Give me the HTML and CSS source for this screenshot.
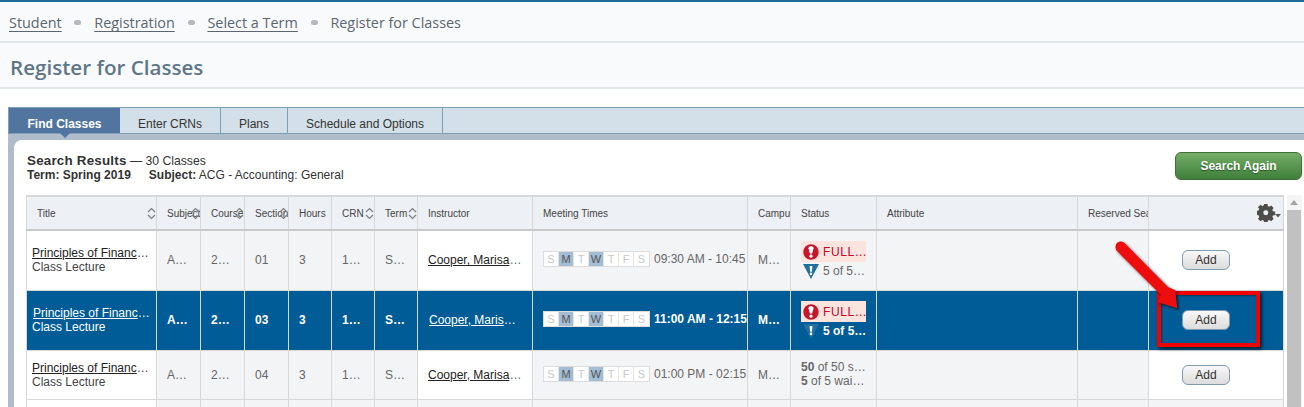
FILE: index.html
```html
<!DOCTYPE html>
<html lang="en">
<head>
<meta charset="utf-8">
<title>Register for Classes</title>
<link rel="stylesheet" href="styles.css">
</head>
<body>
<svg class="defs" width="0" height="0" aria-hidden="true">
  <symbol id="sort" viewBox="0 0 9 13"><path d="M1 5 4.5 1.5 8 5M1 8 4.5 11.5 8 8" fill="none" stroke="#7b8084" stroke-width="1.2"/></symbol>
  <symbol id="full" viewBox="0 0 17 17"><circle cx="8.5" cy="8.5" r="8.2" fill="#c9152b"/><path d="M5.8 4.4C5.8 1.8 11.2 1.800 11.2 4.4L9.7 10H7.3Z" fill="#fff"/><circle cx="8.5" cy="12.9" r="1.7" fill="#fff"/></symbol>
  <symbol id="warn" viewBox="0 0 16 15"><path d="M0 0H16L8 15Z" fill="#1f6f9f"/><path d="M6.6 2H9.4L8.9 7.8H7.1Z" fill="#fff"/><circle cx="8" cy="9.9" r="1.3" fill="#fff"/></symbol>
</svg>
<header class="crumbs">
  <a href="#">Student</a><i></i><a href="#">Registration</a><i></i><a href="#">Select a Term</a><i></i><span>Register for Classes</span>
</header>
<h1 class="page-title">Register for Classes</h1>
<main class="panel">
  <nav class="tabs">
    <a class="tab active" href="#">Find Classes</a>
    <a class="tab t2" href="#">Enter CRNs</a>
    <a class="tab t3" href="#">Plans</a>
    <a class="tab t4" href="#">Schedule and Options</a>
  </nav>
  <section class="card">
    <div class="results-head">
      <div class="results-text">
        <div class="results-title"><b>Search Results</b> — 30 Classes</div>
        <div class="results-sub"><b class="term">Term: Spring 2019</b><b>Subject:</b> ACG - Accounting: General</div>
      </div>
      <button class="search-again">Search Again</button>
    </div>
    <div class="table-wrap">
      <table>
        <thead>
          <tr>
            <th>Title<svg class="s"><use href="#sort"/></svg></th>
            <th>Subject<svg class="s"><use href="#sort"/></svg></th>
            <th>Course<svg class="s"><use href="#sort"/></svg></th>
            <th>Section<svg class="s"><use href="#sort"/></svg></th>
            <th>Hours</th>
            <th>CRN<svg class="s"><use href="#sort"/></svg></th>
            <th>Term<svg class="s"><use href="#sort"/></svg></th>
            <th>Instructor</th>
            <th>Meeting Times</th>
            <th>Campus</th>
            <th>Status</th>
            <th>Attribute</th>
            <th>Reserved Seats</th>
            <th class="gear-cell">
              <svg class="gear" viewBox="0 0 24 18"><g transform="translate(0.2 0) scale(.86)"><path fill="#4c4c4c" fill-rule="evenodd" d="M8 0h4l.5 2.6 1.6.7 2.2-1.5 2.8 2.8-1.5 2.2.7 1.6 2.6.5v4l-2.6.5-.7 1.6 1.5 2.2-2.8 2.8-2.2-1.5-1.6.7-.5 2.6H8l-.5-2.6-1.6-.7-2.2 1.5-2.8-2.8 1.500-2.2-.7-1.6L-.9 12V8l2.6-.5.7-1.6-1.5-2.2 2.8-2.8 2.2 1.5 1.6-.7ZM10 7.2a2.9 2.9 0 1 0 0 5.8 2.9 2.9 0 0 0 0-5.8Z"/></g><path fill="#5a5a5a" d="M18 10h6l-3 3.6Z"/></svg>
            </th>
          </tr>
        </thead>
        <tbody>
          <tr class="r1">
            <td class="title"><a href="#">Principles of Financ</a>…<br>Class Lecture</td>
            <td>A…</td><td>2…</td><td>01</td><td>3</td><td>1…</td><td>S…</td>
            <td class="inst"><a href="#">Cooper, Marisa</a>…</td>
            <td class="meet"><span class="days"><u>S</u><u class="on">M</u><u>T</u><u class="on">W</u><u>T</u><u>F</u><u>S</u></span><span class="time">09:30 AM - 10:45 AM</span></td>
            <td>M…</td>
            <td class="status"><div class="full"><svg><use href="#full"/></svg><span>FULL…</span></div><div class="wait"><svg><use href="#warn"/></svg>5 of 5…</div></td>
            <td></td><td></td>
            <td class="act"><button class="add">Add</button></td>
          </tr>
          <tr class="r2 sel">
            <td class="title"><a href="#">Principles of Financ</a>…<br>Class Lecture</td>
            <td>A…</td><td>2…</td><td>03</td><td>3</td><td>1…</td><td>S…</td>
            <td class="inst"><a href="#">Cooper, Maris</a>…</td>
            <td class="meet"><span class="days"><u>S</u><u class="on">M</u><u>T</u><u class="on">W</u><u>T</u><u>F</u><u>S</u></span><span class="time">11:00 AM - 12:15 PM</span></td>
            <td>M…</td>
            <td class="status"><div class="full"><svg><use href="#full"/></svg><span>FULL…</span></div><div class="wait"><svg><use href="#warn"/></svg>5 of 5…</div></td>
            <td></td><td></td>
            <td class="act"><button class="add">Add</button></td>
          </tr>
          <tr class="r3">
            <td class="title"><a href="#">Principles of Financ</a>…<br>Class Lecture</td>
            <td>A…</td><td>2…</td><td>04</td><td>3</td><td>1…</td><td>S…</td>
            <td class="inst"><a href="#">Cooper, Marisa</a>…</td>
            <td class="meet"><span class="days"><u>S</u><u class="on">M</u><u>T</u><u class="on">W</u><u>T</u><u>F</u><u>S</u></span><span class="time">01:00 PM - 02:15 PM</span></td>
            <td>M…</td>
            <td class="status plain"><div><b>50</b> of 50 s…</div><div><b>5</b> of 5 wai…</div></td>
            <td></td><td></td>
            <td class="act"><button class="add">Add</button></td>
          </tr>
          <tr class="r4"><td></td><td></td><td></td><td></td><td></td><td></td><td></td><td></td><td></td><td></td><td></td><td></td><td></td><td></td></tr>
        </tbody>
      </table>
      <div class="scrollbar"><span class="up"></span><span class="thumb"></span></div>
    </div>
  </section>
</main>
<div class="callout-box"></div>
<svg class="callout-arrow" viewBox="0 0 90 90">
  <defs><filter id="shade" x="-20%" y="-20%" width="150%" height="150%"><feDropShadow dx="2" dy="2" stdDeviation="1.5" flood-color="#000" flood-opacity=".65"/></filter></defs>
  <path filter="url(#shade)" fill="#ee0d0d" d="M3 3C5 1 8.500 1 10.500 3L54 47 61 50 63 68 44 62 47 55 3 11C1 9 1 5 3 3Z"/>
</svg>
</body>
</html>
```
FILE: styles.css
```css
* { box-sizing: border-box; }
html, body { margin: 0; height: 407px; overflow: hidden; }
body { position: relative; background: #fff; font-family: "Liberation Sans", Arial, sans-serif; color: #333; border-top: 2px solid #1f6b9a; }
.defs { position: absolute; }

.crumbs { display: flex; align-items: center; height: 41px; padding: 2px 0 0 9px; background: #f8fafc; border-bottom: 2px solid #e2e7ea; font: 14.4px "Open Sans", sans-serif; color: #5b6670; }
.crumbs a { color: #5b6670; text-decoration: underline; text-underline-offset: 3px; }
.crumbs i { width: 7px; height: 5px; margin: 0 12.8px; border-radius: 3px; background: #b4b8bb; }

.page-title { margin: 0; height: 46px; padding: 9px 0 0 10px; background: #f8fafc; border-bottom: 2px solid #e2e7ea; font: 600 20.6px/30px "Open Sans", sans-serif; color: #5f7689; }

.panel { margin: 18px 0 0 8px; background: #aebccc; height: 300px; }
.tabs { display: flex; height: 27px; background: #d4e0e9; border-top: 1px solid #7fa0b4; border-left: 1px solid #7fa0b4; border-bottom: 1px solid #7fa0b4; font-size: 12px; }
.tab { display: block; height: 25px; padding-top: 4px; text-align: center; line-height: 25px; color: #333; text-decoration: none; border-right: 1px solid #7fa0b4; }
.tab.active { position: relative; width: 111px; background: #51759f; color: #fff; font-weight: bold; border-right: 0; }
.tab.active::after { content: ""; position: absolute; left: 50%; margin-left: -5px; top: 25px; border: 5px solid transparent; border-top-color: #51759f; border-bottom: 0; }
.t2 { width: 101px; }
.t3 { width: 67px; }
.t4 { width: 155px; }

.card { margin: 6px 0 0 6px; height: 270px; padding: 14px 2px 0 12px; background: #fff; border-top-left-radius: 8px; }
.results-head { display: flex; justify-content: space-between; align-items: flex-start; height: 41px; font-size: 12.2px; line-height: 14px; }
.results-text { padding-left: 1px; }
.results-title b { font-size: 13.4px; letter-spacing: .2px; }
.results-sub { font-size: 12px; }
.results-sub b { font-weight: bold; }
.term { margin-right: 18px; }
.search-again { width: 127px; height: 28px; margin-top: -2px; border: 1px solid #3d7036; border-radius: 6px; background: linear-gradient(#74ae68, #3f7f3a); color: #fff; font: bold 12px "Liberation Sans", sans-serif; text-shadow: 0 1px 1px #274f24; }

.table-wrap { display: flex; align-items: flex-start; gap: 3px; }
table { width: 1258px; height: 212px; table-layout: fixed; border-collapse: collapse; font-size: 12px; color: #666; border-top: 2px solid #d8d8d8; border-left: 1px solid #d8d8d8; border-right: 1px solid #d8d8d8; }
th, td { padding: 0 0 0 10px; border-left: 1px solid #d8d8d8; border-bottom: 1px solid #d8d8d8; white-space: nowrap; overflow: hidden; background: #f3f4f6; }
th:nth-child(1) { width: 130px; }
th:nth-child(2), th:nth-child(3), th:nth-child(4) { width: 44px; }
th:nth-child(5), th:nth-child(6), th:nth-child(7) { width: 43px; }
th:nth-child(8) { width: 115px; }
th:nth-child(9) { width: 215px; }
th:nth-child(10) { width: 43px; }
th:nth-child(11) { width: 86px; }
th:nth-child(12) { width: 201px; }
th:nth-child(13) { width: 71px; }
th { position: relative; height: 34px; background: #edf0f4; border-bottom: 2px solid #c9c9c9; font-weight: normal; font-size: 10px; text-align: left; color: #444; }
th:first-child { border-top-left-radius: 6px; }
.s { position: absolute; right: 0; top: 10px; width: 9px; height: 13px; }
.gear-cell { padding: 0; }
.gear { position: absolute; right: 2px; top: 7px; width: 24px; height: 18px; }

.r1 td { height: 60px; }
.r2 td { height: 60px; }
.r3 td { height: 49px; }
.r4 td { height: 8px; }
td:first-child, td.inst, td.act { background: #fff; }
td:first-child { padding-left: 5px; line-height: 14px; color: #444; }
td a { color: #222; text-decoration: underline; }
td.meet { padding-bottom: 2px; }

.sel td { background: #005c96; color: #fff; font-weight: bold; }
.sel td.title, .sel td.inst { font-weight: normal; }
.sel td.title a { margin-left: 1px; }
.sel td a { color: #fff; }
.sel td.inst { padding-left: 11px; }

.days { display: inline-flex; vertical-align: middle; height: 16px; border: 1px solid #dcdcdc; background: #fff; margin-right: 4px; }
.days u { width: 15px; text-align: center; font-size: 11px; line-height: 14px; text-decoration: none; color: #c8c8c8; font-weight: normal; border-right: 1px solid #e6e6e6; }
.days u:last-child { border-right: 0; }
.days u.on { background: #a2bdd4; color: #555; }
.time { vertical-align: middle; }

.status { font-size: 12px; line-height: 14px; }
.status.plain { padding-bottom: 2px; }
.full { display: flex; align-items: center; width: 65px; height: 21px; background: #fbe4de; color: #c8002a; letter-spacing: .6px; font-weight: normal; font-size: 12px; }
.full svg { flex: none; width: 16px; height: 16px; margin: 0 4px 0 2px; }
.wait { display: flex; align-items: center; height: 16px; margin-top: 1px; }
.wait svg { flex: none; width: 16px; height: 15px; margin: 0 4px 0 2px; }

.act { text-align: center; padding: 0 20px 0 0 !important; }
.add { width: 48px; height: 20px; padding: 0; border: 1px solid #7f9bb0; border-radius: 6px; background: linear-gradient(#f8f8f8, #dcdcdc); font: 12px "Liberation Sans", sans-serif; color: #333; }

.scrollbar { display: flex; flex-direction: column; width: 15px; height: 212px; background: #f5f5f5; }
.up { height: 15px; position: relative; }
.up::after { content: ""; position: absolute; left: 3px; top: 5px; border: 4px solid transparent; border-bottom: 5px solid #a3a3a3; border-top: 0; }
.thumb { flex: 1; margin-right: 1px; background: #c1c1c1; }

.callout-box { position: absolute; left: 1157px; top: 289px; width: 103px; height: 56px; border: 4px solid #f00000; box-shadow: 2px 2px 3px rgba(0,0,0,.7), inset 1px 1px 2px rgba(0,0,0,.4); }
.callout-arrow { position: absolute; left: 1114px; top: 238px; width: 90px; height: 90px; overflow: visible; }
```
